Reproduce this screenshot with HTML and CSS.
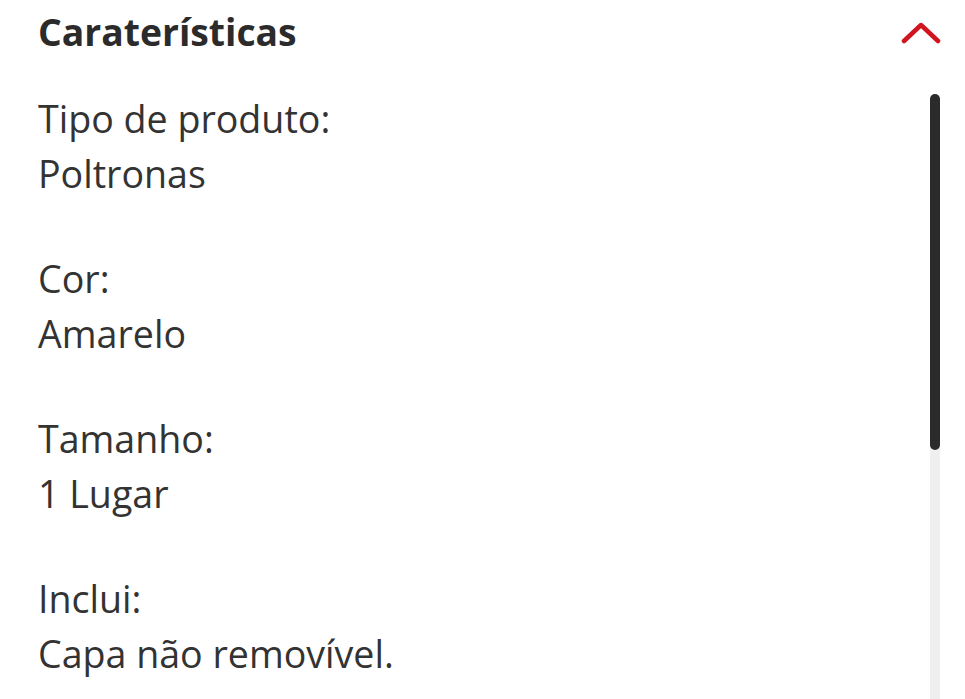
FILE: index.html
```html
<!DOCTYPE html>
<html lang="pt">
<head>
<meta charset="utf-8">
<link rel="stylesheet" href="styles.css">
</head>
<body>
<section class="panel">
  <header class="panel-head">
    <h2 class="title">Caraterísticas</h2>
    <svg class="chevron" width="42" height="24" viewBox="0 0 42 24"><path d="M4 21 L21 5 L38 21" fill="none" stroke="#d2141e" stroke-width="4.5" stroke-linecap="round" stroke-linejoin="round"/></svg>
  </header>
  <div class="panel-body">
    <div class="content">
      <p class="item">Tipo de produto:<br>Poltronas</p>
      <p class="item">Cor:<br>Amarelo</p>
      <p class="item">Tamanho:<br>1 Lugar</p>
      <p class="item">Inclui:<br>Capa não removível.</p>
    </div>
    <div class="scrollbar"><div class="thumb"></div></div>
  </div>
</section>
</body>
</html>
```
FILE: styles.css
```css
html, body {
  margin: 0;
  padding: 0;
  background: #fff;
}
body {
  width: 965px;
  height: 699px;
  overflow: hidden;
  font-family: "Open Sans", sans-serif;
  color: #333;
}
.panel {
  padding: 0 25px 0 38px;
}
.panel-head {
  display: flex;
  justify-content: space-between;
  align-items: center;
  height: 64px;
}
.title {
  margin: 0;
  font-size: 37.3px;
  font-weight: 700;
  color: #2b2b2b;
  line-height: 1;
}
.chevron {
  display: block;
  margin-right: -2px;
}
.panel-body {
  display: flex;
  justify-content: space-between;
}
.content {
  padding-top: 28px;
}
.item {
  margin: 0 0 51px;
  font-size: 37.6px;
  line-height: 54.5px;
  color: #333;
}
.scrollbar {
  width: 10px;
  margin-top: 30px;
  height: 640px;
  background: #efefef;
  border-radius: 5px;
}
.thumb {
  height: 356px;
  background: #2b2b2b;
  border-radius: 5px;
}
```
